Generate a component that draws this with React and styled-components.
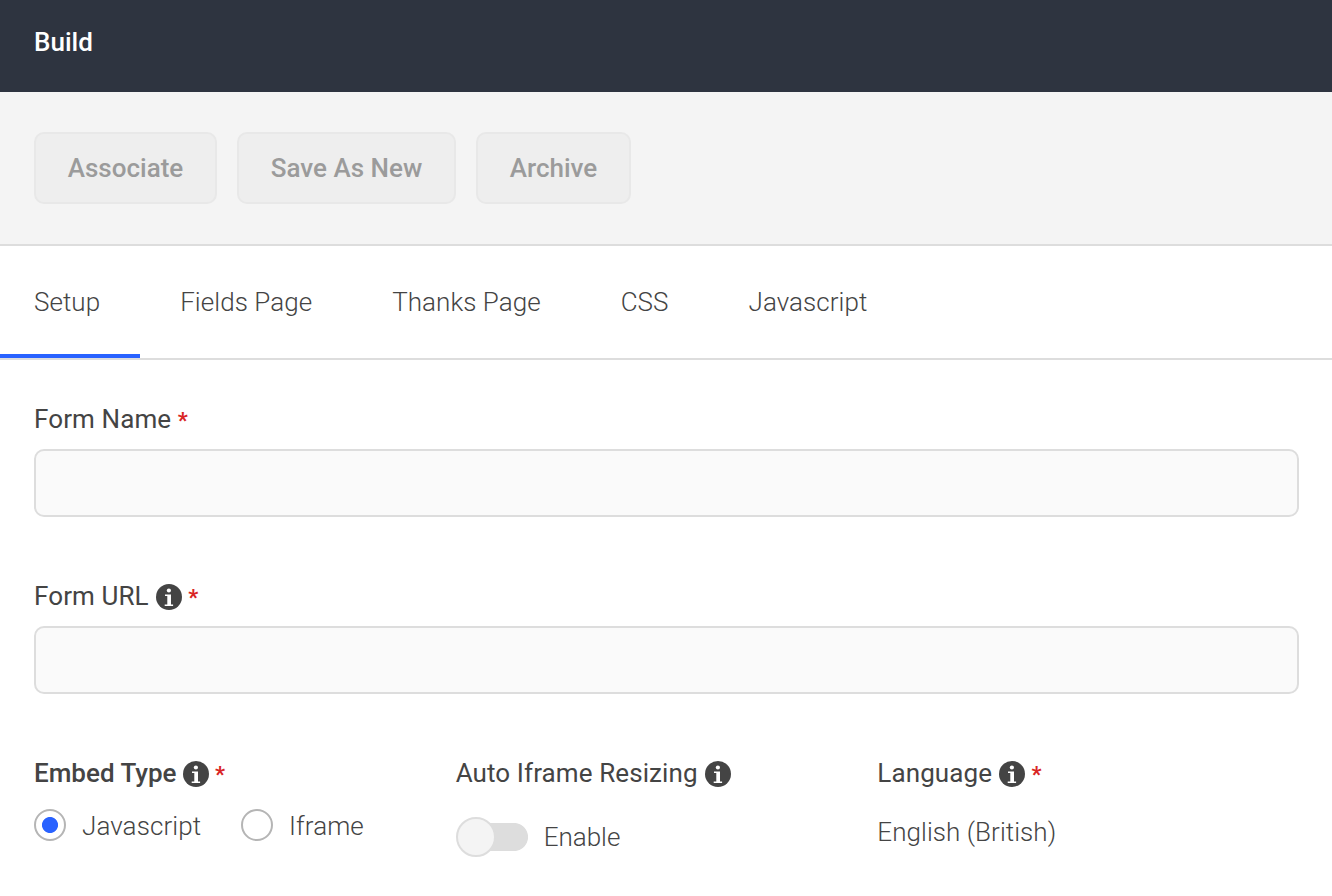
import { useState } from "react";
import styled, { createGlobalStyle } from "styled-components";

const GlobalStyle = createGlobalStyle`
  *,
  *::before {
    box-sizing: border-box;
  }

  body {
    margin: 0;
    background-color: #ffffff;
    color: #444444;
    font-family: Roboto, "Liberation Sans", sans-serif;
    font-size: 26px;
    line-height: 32px;
    -webkit-font-smoothing: antialiased;
  }
`;

const PageStyled = styled.div`
  height: 896px;
  overflow: hidden;
`;

const HeaderStyled = styled.header`
  height: 92px;
  padding: 26px 34px;
  background-color: #2e3440;
  color: #ffffff;
`;

const TitleStyled = styled.h1`
  margin: 0;
  font-size: 26px;
  font-weight: 500;
  line-height: 32px;
`;

const ToolbarStyled = styled.div`
  height: 154px;
  display: flex;
  align-items: flex-start;
  gap: 20px;
  padding: 40px 34px;
  border-bottom: 2px solid #dddddd;
  background-color: #f4f4f4;
`;

const ButtonStyled = styled.button`
  width: ${({ $width }) => $width}px;
  height: 72px;
  padding: 0;
  border: 2px solid #e8e8e8;
  border-radius: 10px;
  background-color: #eeeeee;
  color: #9b9b9b;
  font: inherit;
  font-weight: 500;
`;

const TabsStyled = styled.nav`
  height: 114px;
  display: flex;
  border-bottom: 2px solid #dddddd;
`;

const TabStyled = styled.button`
  display: block;
  padding: 4px 40px 0;
  border: 0;
  border-bottom: 4px solid ${({ $active }) => ($active ? "#2962ff" : "transparent")};
  background: none;
  color: inherit;
  font: inherit;
  font-weight: 300;
  letter-spacing: 0.05px;

  &:first-child {
    padding-left: 34px;
  }
`;

const FormStyled = styled.form`
  padding: 43px 33px 0 34px;
`;

const FieldStyled = styled.div`
  height: 177px;
`;

const InfoIconStyled = styled.svg`
  width: 26px;
  height: 26px;
  margin: 2.5px 0 0 7px;
`;

const LabelStyled = styled.div`
  height: 32px;
  display: flex;
  align-items: center;
  font-weight: ${({ $strong }) => ($strong ? 500 : 400)};
  letter-spacing: ${({ $strong }) => ($strong ? 0 : 0.1)}px;

  ${InfoIconStyled} {
    margin-left: ${({ $strong }) => ($strong ? 6 : 7)}px;
  }
`;

const RequiredStyled = styled.span`
  margin: 3px 0 0 6.5px;
  color: #d92525;
  font-size: 22px;
  font-weight: 700;
`;

const InputStyled = styled.input`
  width: 100%;
  height: 68px;
  display: block;
  margin-top: 14px;
  padding: 0 20px;
  border: 2px solid #dddddd;
  border-radius: 10px;
  background-color: #fafafa;
  color: inherit;
  font: inherit;
  outline: none;
`;

const ColumnsStyled = styled.div`
  display: grid;
  grid-template-columns: repeat(3, 1fr);
`;

const RadiosStyled = styled.div`
  display: flex;
  gap: 40px;
  margin-top: 20px;
`;

const OptionStyled = styled.label`
  height: 32px;
  display: flex;
  align-items: center;
  font-weight: 300;
`;

const RadioTextStyled = styled.span`
  padding-top: 2px;
  font-weight: 350;
  letter-spacing: 0.08px;
`;

const RadioStyled = styled.input`
  appearance: none;
  width: 32px;
  height: 32px;
  margin: 0 16px 0 0;
  border: 2px solid #b5b5b5;
  border-radius: 50%;
  background-color: #ffffff;

  &:checked {
    background: radial-gradient(circle, #2962ff 7.6px, #ffffff 8.4px);
  }
`;

const SwitchRowStyled = styled(OptionStyled)`
  height: 40px;
  margin-top: 28px;
`;

const SwitchStyled = styled.input`
  appearance: none;
  width: 72px;
  height: 40px;
  display: flex;
  align-items: center;
  margin: 0 16px 0 0;
  background: linear-gradient(#dddddd, #dddddd) 20px 6px / 38px 28px no-repeat,
    radial-gradient(circle, #dddddd 13.6px, transparent 14.4px) 44px 6px / 28px 28px no-repeat;

  &::before {
    content: "";
    width: 40px;
    height: 40px;
    border: 2px solid #dddddd;
    border-radius: 50%;
    background-color: #f4f4f4;
  }

  &:checked::before {
    margin-left: 32px;
  }
`;

const ValueStyled = styled.div`
  margin-top: 27px;
  font-weight: 300;
  letter-spacing: 0.05px;
`;

const actions = [
  { name: "Associate", width: 183 },
  { name: "Save As New", width: 219 },
  { name: "Archive", width: 155 },
];
const tabs = ["Setup", "Fields Page", "Thanks Page", "CSS", "Javascript"];
const embedTypes = ["Javascript", "Iframe"];

const InfoIcon = () => (
  <InfoIconStyled viewBox="0 0 26 26" aria-hidden="true">
    <circle cx="13" cy="13" r="13" fill="#444444" />
    <circle cx="12.9" cy="6.5" r="2.1" fill="#ffffff" />
    <path
      d="M9 10.4h6v10h2.1v1.6H8.7v-1.6h2.6v-8.3H9z"
      fill="#ffffff"
    />
  </InfoIconStyled>
);

const Label = ({ children, info, required, strong }) => (
  <LabelStyled $strong={strong}>
    {children}
    {info && <InfoIcon />}
    {required && <RequiredStyled>*</RequiredStyled>}
  </LabelStyled>
);

const App = () => {
  const [activeTab, setActiveTab] = useState("Setup");
  const [embedType, setEmbedType] = useState("Javascript");

  return (
    <PageStyled>
      <GlobalStyle />
      <HeaderStyled>
        <TitleStyled>Build</TitleStyled>
      </HeaderStyled>
      <ToolbarStyled>
        {actions.map(({ name, width }) => (
          <ButtonStyled key={name} $width={width} disabled>
            {name}
          </ButtonStyled>
        ))}
      </ToolbarStyled>
      <TabsStyled>
        {tabs.map((tab) => (
          <TabStyled
            key={tab}
            $active={tab === activeTab}
            onClick={() => setActiveTab(tab)}
          >
            {tab}
          </TabStyled>
        ))}
      </TabsStyled>
      <FormStyled>
        <FieldStyled>
          <Label required>Form Name</Label>
          <InputStyled type="text" aria-label="Form Name" />
        </FieldStyled>
        <FieldStyled>
          <Label info required>
            Form URL
          </Label>
          <InputStyled type="text" aria-label="Form URL" />
        </FieldStyled>
        <ColumnsStyled>
          <div>
            <Label info required strong>
              Embed Type
            </Label>
            <RadiosStyled>
              {embedTypes.map((type) => (
                <OptionStyled key={type}>
                  <RadioStyled
                    type="radio"
                    name="embedType"
                    checked={type === embedType}
                    onChange={() => setEmbedType(type)}
                  />
                  <RadioTextStyled>{type}</RadioTextStyled>
                </OptionStyled>
              ))}
            </RadiosStyled>
          </div>
          <div>
            <Label info>Auto Iframe Resizing</Label>
            <SwitchRowStyled>
              <SwitchStyled type="checkbox" />
              Enable
            </SwitchRowStyled>
          </div>
          <div>
            <Label info required>
              Language
            </Label>
            <ValueStyled>English (British)</ValueStyled>
          </div>
        </ColumnsStyled>
      </FormStyled>
    </PageStyled>
  );
};

export default App;
